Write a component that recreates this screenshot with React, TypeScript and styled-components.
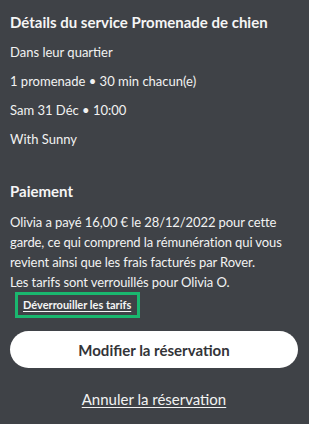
import styled, { createGlobalStyle } from "styled-components";

const GlobalStyle = createGlobalStyle`
  html, body {
    margin: 0;
    padding: 0;
    background: #3f4247;
  }
  body {
    font-family: Lato, "Noto Sans", sans-serif;
    color: #f2f2f2;
    -webkit-font-smoothing: antialiased;
  }
`;

const Page = styled.div`
  width: 309px;
  height: 424px;
  box-sizing: border-box;
  padding: 12px 11px 0 10px;
  display: flex;
  flex-direction: column;
`;

const Section = styled.section<{ $gap?: number }>`
  display: flex;
  flex-direction: column;
  margin-top: ${({ $gap }) => $gap ?? 0}px;
`;

const Heading = styled.h2`
  margin: 0;
  font-size: 15px;
  line-height: 20px;
  font-weight: 700;
  color: #f5f5f5;
`;

const DetailList = styled.div`
  display: flex;
  flex-direction: column;
  gap: 9px;
  margin-top: 10px;
`;

const DetailLine = styled.div`
  font-size: 13px;
  line-height: 20px;
`;

const Paragraph = styled.p`
  margin: 11px 0 0;
  font-size: 13px;
  line-height: 20px;
  letter-spacing: -0.1px;
`;

const UnlockBox = styled.div`
  align-self: flex-start;
  margin-left: 5px;
  border: 3px solid #1ab76f;
  padding: 0 6px 0 5px;
`;

const UnlockLink = styled.a`
  display: block;
  font-size: 11px;
  line-height: 20px;
  font-weight: 700;
  color: #f5f5f5;
  text-decoration: underline;
  text-underline-offset: 2px;
`;

const PrimaryButton = styled.button`
  margin-top: 13px;
  height: 37px;
  width: 288px;
  border: none;
  border-radius: 19px;
  background: #ffffff;
  color: #333438;
  font-family: inherit;
  font-size: 15px;
  font-weight: 700;
`;

const CancelLink = styled.a`
  margin-top: 21px;
  align-self: center;
  font-size: 15px;
  line-height: 20px;
  color: #f2f2f2;
  text-decoration: underline;
  text-underline-offset: 2px;
`;

export default function App() {
  return (
    <>
      <GlobalStyle />
      <Page>
        <Section>
          <Heading>Détails du service Promenade de chien</Heading>
          <DetailList>
            <DetailLine>Dans leur quartier</DetailLine>
            <DetailLine>1 promenade • 30 min chacun(e)</DetailLine>
            <DetailLine>Sam 31 Déc • 10:00</DetailLine>
            <DetailLine>With Sunny</DetailLine>
          </DetailList>
        </Section>
        <Section $gap={32}>
          <Heading>Paiement</Heading>
          <Paragraph>
            Olivia a payé 16,00 € le 28/12/2022 pour cette garde, ce qui
            comprend la rémunération qui vous revient ainsi que les frais
            facturés par Rover.
            <br />
            Les tarifs sont verrouillés pour Olivia O.
          </Paragraph>
          <UnlockBox>
            <UnlockLink>Déverrouiller les tarifs</UnlockLink>
          </UnlockBox>
        </Section>
        <PrimaryButton>Modifier la réservation</PrimaryButton>
        <CancelLink>Annuler la réservation</CancelLink>
      </Page>
    </>
  );
}
